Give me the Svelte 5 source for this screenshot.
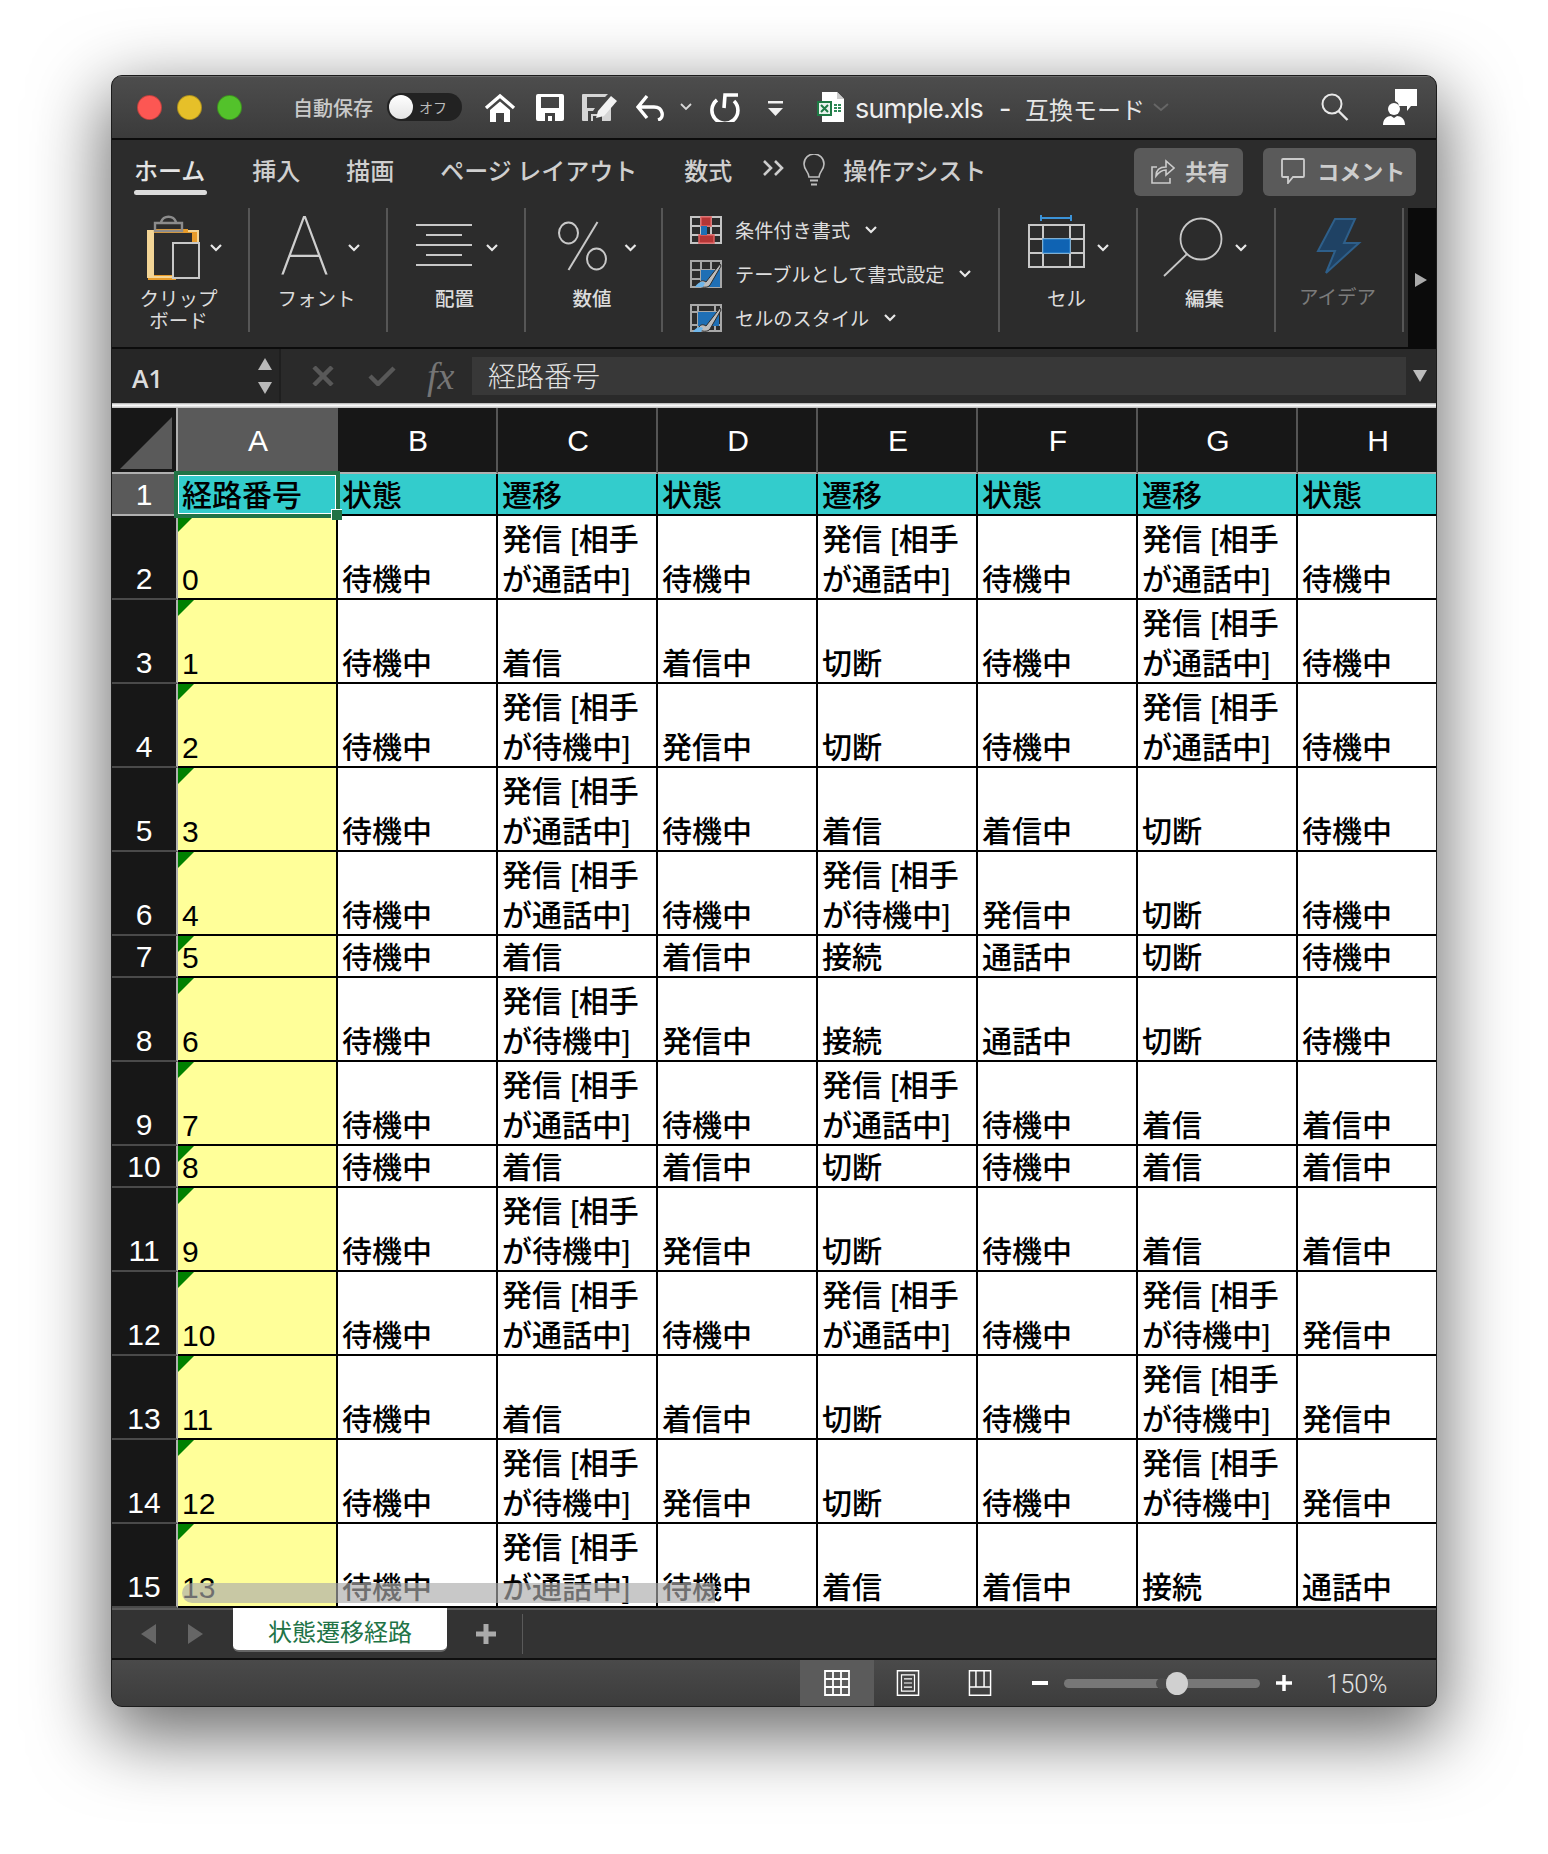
<script>
  const T = '発信 [相手が通話中]';
  const W = '発信 [相手が待機中]';
  const K = '待機中', I = '着信', IC = '着信中', C = '切断', H = '発信中', J = '接続', TK = '通話中';
  const cols = ['A', 'B', 'C', 'D', 'E', 'F', 'G', 'H'];
  const rows = [
    ['0', K, T, K, T, K, T, K],
    ['1', K, I, IC, C, K, T, K],
    ['2', K, W, H, C, K, T, K],
    ['3', K, T, K, I, IC, C, K],
    ['4', K, T, K, W, H, C, K],
    ['5', K, I, IC, J, TK, C, K],
    ['6', K, W, H, J, TK, C, K],
    ['7', K, T, K, T, K, I, IC],
    ['8', K, I, IC, C, K, I, IC],
    ['9', K, W, H, C, K, I, IC],
    ['10', K, T, K, T, K, W, H],
    ['11', K, I, IC, C, K, W, H],
    ['12', K, W, H, C, K, W, H],
    ['13', K, T, K, I, IC, J, TK]
  ].map((cells) => ({ cells, tall: cells.some((c) => c.length > 5) }));
  const head = ['状態', '遷移', '状態', '遷移', '状態', '遷移', '状態'];
  const tabs = ['挿入', '描画', 'ページ レイアウト', '数式'];
</script>

<div class="page">
  <div class="window">
    <header class="titlebar">
      <div class="lights"><i class="red"></i><i class="yellow"></i><i class="green"></i></div>
      <span class="autosave">自動保存</span>
      <div class="toggle"><i></i><span>オフ</span></div>
      <svg class="ic-home" viewBox="0 0 32 29"><path d="M2 15 16 3l14 12" fill="none" stroke="#fff" stroke-width="3.400"/><path d="M6 17 16 8.500 26 17v12h-6v-9h-8v9H6z" fill="#fff"/></svg>
      <svg class="ic-save" viewBox="0 0 28 27"><path fill-rule="evenodd" d="M2 0h24a2 2 0 0 1 2 2v23a2 2 0 0 1-2 2H2a2 2 0 0 1-2-2V2a2 2 0 0 1 2-2zM5 3v11h18V3zM9 19v8h3v-5h4v5h3v-8z" fill="#fff"/></svg>
      <svg class="ic-edit" viewBox="0 0 36 27"><path fill-rule="evenodd" d="M1 0h25l-3 3H5v11h8l-2 3H6v10H1a1 1 0 0 1-1-1V1a1 1 0 0 1 1-1zM9 20v7h2v-5h6v-2zM29 13v13a1 1 0 0 1-1 1H20v-7z" fill="#d5d5d5"/><path d="M14 24l2-7L29 2l6 5-13 15z" fill="#f2f2f2"/></svg>
      <svg class="ic-undo" viewBox="0 0 30 28"><path d="M11 3 2 14l9 11M2 14h16c9 0 11 11 4 13" fill="none" stroke="#fff" stroke-width="3.400"/></svg>
      <svg class="ic-chev" viewBox="0 0 12 8"><path d="M1 1l5 5 5-5" fill="none" stroke="#d8d8d8" stroke-width="1.800"/></svg>
      <svg class="ic-redo" viewBox="0 0 30 30"><path d="M7 8a13 13 0 1 0 17 1" fill="none" stroke="#fff" stroke-width="3.600"/><path d="M14 16l1-13h13" fill="none" stroke="#fff" stroke-width="3.600"/></svg>
      <svg class="ic-cust" viewBox="0 0 15 15"><path d="M0 0h15v2.500H0zM0 7h15l-7.500 8z" fill="#f0f0f0"/></svg>
      <svg class="ic-doc" viewBox="0 0 28 30"><path d="M5 0h15l7 7v23H5z" fill="#fff"/><path d="M20 0l7 7h-7z" fill="#ccc"/><path d="M0 9h15v15H0z" fill="#1f7a45"/><path d="M2 11h11v11H2z" fill="#fff" opacity=".9"/><path d="M4 13l7 7M11 13l-7 7" stroke="#1f7a45" stroke-width="2"/><path d="M17 12h3v2h-3zM21 12h3v2h-3zM17 15h3v2h-3zM21 15h3v2h-3zM17 18h3v2h-3zM21 18h3v2h-3z" fill="#2f8a58"/></svg>
      <span class="docname">sumple.xls</span>
      <span class="dash">-</span>
      <span class="mode">互換モード</span>
      <svg class="ic-modechev" viewBox="0 0 16 9"><path d="M1 1l7 6 7-6" fill="none" stroke="#666" stroke-width="2"/></svg>
      <svg class="ic-search" viewBox="0 0 28 28"><circle cx="11" cy="11" r="9.500" fill="none" stroke="#e8e8e8" stroke-width="2"/><path d="M17.500 18l9 9" stroke="#e8e8e8" stroke-width="2.400"/></svg>
      <svg class="ic-person" viewBox="0 0 34 36"><circle cx="11" cy="20" r="6" fill="#fff"/><path d="M0 36c0-6 4-9 8-9l3 2 3-2c4 0 8 3 8 9z" fill="#fff"/><path d="M12 0h22v17H28l-4 5v-5h-8l-1-3-3-2z" fill="#fff"/></svg>
    </header>

    <section class="ribbon">
      <nav class="tabs">
        <span class="tab home">ホーム</span>
        {#each tabs as t}<span class="tab">{t}</span>{/each}
        <svg class="ic-more" viewBox="0 0 23 18"><path d="M2 2l7 7-7 7M13 2l7 7-7 7" fill="none" stroke="#ccc" stroke-width="2.600"/></svg>
        <svg class="ic-bulb" viewBox="0 0 24 32"><path d="M7 23c0-5-5-7-5-13a10 10 0 0 1 20 0c0 6-5 8-5 13z" fill="none" stroke="#bdbdbd" stroke-width="1.600"/><path d="M8 26.500h8M9 30.500h6" stroke="#bdbdbd" stroke-width="2"/></svg>
        <span class="tab assist">操作アシスト</span>
        <button class="share">
          <svg class="ic-share" viewBox="0 0 24 26"><path d="M6 9H1v16h18v-5" fill="none" stroke="#ccc" stroke-width="1.600"/><path d="M5 18c0-6 4-9 10-9V3l8 7-8 7v-5c-4 0-7 2-10 6z" fill="none" stroke="#ccc" stroke-width="1.600"/></svg>
          <span>共有</span>
        </button>
        <button class="comment">
          <svg class="ic-comment" viewBox="0 0 24 26"><path d="M2 1h20a1 1 0 0 1 1 1v16a1 1 0 0 1-1 1H12l-5 6v-6H2a1 1 0 0 1-1-1V2a1 1 0 0 1 1-1z" fill="none" stroke="#ccc" stroke-width="1.800"/></svg>
          <span>コメント</span>
        </button>
      </nav>

      <div class="groups">
        <div class="group">
          <svg class="g-ic" viewBox="112 208 136 79">
            <path d="M148 231h6v-2h34v2h10v13h-6v-11H154v42h22v5h-28z" fill="#e79b2a"/>
            <path d="M147 230h7v46h22v2h-29zM188 230h11v14h-2v-12h-9z" fill="#f3d596"/>
            <path d="M155 231h27v-8h-27zM161 222a8 8 0 0 1 15 0" fill="none" stroke="#8c8c8c" stroke-width="2.400"/>
            <rect x="173" y="243" width="26" height="35" fill="#2c2c2c" stroke="#c8c8c8" stroke-width="2"/>
            <path class="chev" d="M211 245l5 5 5-5"/>
          </svg>
          <div class="label">クリップ<br />ボード</div>
        </div>
        <div class="group">
          <svg class="g-ic" viewBox="250 208 136 79">
            <text class="glyph" x="280" y="274">A</text>
            <path class="chev" d="M349 245l5 5 5-5"/>
          </svg>
          <div class="label">フォント</div>
        </div>
        <div class="group">
          <svg class="g-ic" viewBox="388 208 136 79">
            <path d="M416 225h56M426 235h36M416 245h56M426 255h36M416 265h56" stroke="#c8c8c8" stroke-width="1.800"/>
            <path class="chev" d="M487 245l5 5 5-5"/>
          </svg>
          <div class="label b">配置</div>
        </div>
        <div class="group">
          <svg class="g-ic" viewBox="526 208 135 79">
            <ellipse cx="568" cy="233" rx="9.500" ry="10.500" fill="none" stroke="#c8c8c8" stroke-width="2"/>
            <ellipse cx="596" cy="259" rx="9.500" ry="10.500" fill="none" stroke="#c8c8c8" stroke-width="2"/>
            <path d="M597 222 568 270" stroke="#c8c8c8" stroke-width="2"/>
            <path class="chev" d="M625 245l5 5 5-5"/>
          </svg>
          <div class="label b">数値</div>
        </div>
        <div class="group styles">
          <div class="style-row">
            <svg class="s-ic" viewBox="0 0 32 28"><path d="M1 1h30v26H1zM1 10h30M1 19h30M11 1v26M21 1v26" fill="none" stroke="#c4c4c4" stroke-width="2"/><path d="M11 1h10v9H11zM9 19h15v8H9z" fill="#b43636" stroke="#e06060" stroke-width="1.500"/><path d="M11 10h6v9h-6z" fill="#1f6fb5"/></svg>
            <span>条件付き書式</span>
            <svg class="s-ch" viewBox="0 0 12 8"><path class="chev" d="M1 1l5 5 5-5"/></svg>
          </div>
          <div class="style-row">
            <svg class="s-ic" viewBox="0 0 32 28"><path d="M1 1h30v26H1zM1 10h30M1 19h30M11 1v26M21 1v26" fill="none" stroke="#a8a8a8" stroke-width="2"/><path d="M11 10h19v17H11z" fill="#1f6fb5"/><path d="M8 25c2-5 5-5 8-3l14-18 1 2-11 19c-2 3-8 3-12 0z" fill="#bcbcbc" stroke="#2c2c2c"/><path d="M5 27c3-5 7-6 10-4l-2 4z" fill="#6fb6ea"/></svg>
            <span>テーブルとして書式設定</span>
            <svg class="s-ch" viewBox="0 0 12 8"><path class="chev" d="M1 1l5 5 5-5"/></svg>
          </div>
          <div class="style-row">
            <svg class="s-ic" viewBox="0 0 32 28"><path d="M1 1h30v26H1zM1 8h30M1 21h30M8 1v26M25 1v26" fill="none" stroke="#a8a8a8" stroke-width="2"/><path d="M8 8h21v14H8z" fill="#1f6fb5"/><path d="M8 25c2-5 5-5 8-3l14-18 1 2-11 19c-2 3-8 3-12 0z" fill="#bcbcbc" stroke="#2c2c2c"/><path d="M3 28c3-5 7-6 10-4l-2 4z" fill="#6fb6ea"/></svg>
            <span>セルのスタイル</span>
            <svg class="s-ch" viewBox="0 0 12 8"><path class="chev" d="M1 1l5 5 5-5"/></svg>
          </div>
        </div>
        <div class="group">
          <svg class="g-ic" viewBox="1000 208 136 79">
            <path d="M1041 215v6M1071 215v6M1041 218h30" stroke="#3b93d8" stroke-width="2"/>
            <path d="M1029 225h55v42h-55zM1029 239h55M1029 253h55M1043 225v42M1070 225v42" fill="none" stroke="#c8c8c8" stroke-width="2"/>
            <rect x="1043" y="239" width="27" height="14" fill="#0f63b3" stroke="#3b93d8"/>
            <path class="chev" d="M1098 245l5 5 5-5"/>
          </svg>
          <div class="label">セル</div>
        </div>
        <div class="group">
          <svg class="g-ic" viewBox="1138 208 136 79">
            <circle cx="1201" cy="239" r="20.500" fill="none" stroke="#c8c8c8" stroke-width="1.800"/>
            <path d="M1187 254 1164 276" stroke="#c8c8c8" stroke-width="1.800"/>
            <path class="chev" d="M1236 245l5 5 5-5"/>
          </svg>
          <div class="label b">編集</div>
        </div>
        <div class="group idea">
          <svg class="g-ic" viewBox="1276 208 126 79">
            <path d="M1335 219h20l-11 24h15l-33 30 9-22h-17z" fill="#1f4264" stroke="#2e5f8a" stroke-width="2"/>
          </svg>
          <div class="label dim">アイデア</div>
        </div>
        <div class="strip"><i></i></div>
      </div>
    </section>

    <div class="formula">
      <div class="namebox">
        <span>A1</span>
        <div class="steppers"><i class="up"></i><i class="down"></i></div>
      </div>
      <svg class="ic-x" viewBox="0 0 22 20"><path d="M2 1l18 18M20 1 2 19" stroke="#585858" stroke-width="4.500"/></svg>
      <svg class="ic-ok" viewBox="0 0 28 20"><path d="M2 10l8 8L26 2" fill="none" stroke="#585858" stroke-width="4.500"/></svg>
      <span class="fx">fx</span>
      <div class="input">経路番号</div>
      <i class="fdrop"></i>
    </div>
    <div class="divider"></div>

    <div class="sheet">
      <div class="row chead">
        <div class="corner"><i></i></div>
        {#each cols as c, i}<div class="ch" class:active={i === 0}>{c}</div>{/each}
      </div>
      <div class="row s">
        <div class="rh active">1</div>
        <div class="cell hd">経路番号</div>
        {#each head as h}<div class="cell hd">{h}</div>{/each}
      </div>
      {#each rows as r, i}
        <div class="row" class:t={r.tall} class:s={!r.tall}>
          <div class="rh">{i + 2}</div>
          {#each r.cells as c, j}
            <div class="cell" class:key={j === 0}><span>{c}</span></div>
          {/each}
        </div>
      {/each}
      <div class="selection"><i></i></div>
      <div class="scroll"></div>
    </div>

    <div class="sheetbar">
      <i class="nav left"></i>
      <i class="nav right"></i>
      <div class="sheet-tab">状態遷移経路</div>
      <svg class="ic-plus" viewBox="0 0 20 20"><path d="M10 0v20M0 10h20" stroke="#aaa" stroke-width="5"/></svg>
      <i class="sb-sep"></i>
    </div>

    <footer class="status">
      <div class="view active">
        <svg class="ic-view" viewBox="0 0 26 26"><path d="M1 1h24v24H1zM1 9h24M1 17h24M9 1v24M17 1v24" fill="none" stroke="#fff" stroke-width="1.800"/></svg>
      </div>
      <div class="view">
        <svg class="ic-view" viewBox="0 0 28 32"><path d="M1 1h26v30H1z" fill="none" stroke="#fff" stroke-width="1.800"/><path d="M6 6h16v20H6z" fill="none" stroke="#fff" stroke-width="1.500"/><path d="M9 11h10M9 16h10M9 21h10" stroke="#fff" stroke-width="1.500"/></svg>
      </div>
      <div class="view">
        <svg class="ic-view" viewBox="0 0 28 32"><path d="M1 1h26v30H1zM1 21h8V1M9 21h10V1M19 21h8" fill="none" stroke="#fff" stroke-width="1.800"/></svg>
      </div>
      <i class="minus"></i>
      <div class="track"><b></b><i></i></div>
      <svg class="ic-zplus" viewBox="0 0 16 16"><path d="M8 0v16M0 8h16" stroke="#fff" stroke-width="3.500"/></svg>
      <span class="zoom">150%</span>
    </footer>
  </div>
</div>

<style>
  :global(body) { margin: 0; background: #fff; }
  * { box-sizing: border-box; }
  i { display: block; }
  .page {
    width: 1548px;
    height: 1854px;
    padding: 75px 0 0 111px;
    overflow: hidden;
    font-family: "Liberation Sans", "Noto Sans CJK JP", sans-serif;
  }
  .window {
    width: 1326px;
    height: 1632px;
    border: 1px solid #1c1c1c;
    border-radius: 11px;
    overflow: hidden;
    background: #2c2c2c;
    box-shadow: 0 24px 72px 6px rgba(0, 0, 0, 0.58);
    display: flex;
    flex-direction: column;
  }
  .titlebar {
    height: 64px;
    flex: none;
    display: flex;
    align-items: center;
    background: linear-gradient(#4d4d4d, #3b3b3b);
    border-bottom: 2px solid #0c0c0c;
    box-shadow: inset 0 1px 0 #6b6b6b;
  }
  .lights { display: flex; gap: 15px; margin-left: 25px; }
  .lights i { width: 25px; height: 25px; border-radius: 50%; border: 1px solid rgba(0, 0, 0, 0.25); }
  .red { background: #fc5753; }
  .yellow { background: #e6c029; }
  .green { background: #53c22b; }
  .autosave {
    margin-left: 51px;
    width: 80px;
    white-space: nowrap;
    font: 500 20px "Noto Sans CJK JP", sans-serif;
    color: #c9c9c9;
  }
  .toggle {
    margin-left: 14px;
    width: 75px;
    height: 28px;
    border-radius: 14px;
    background: #222;
    display: flex;
    align-items: center;
    padding-left: 2px;
    gap: 6px;
    font: 14px "Noto Sans CJK JP", sans-serif;
    color: #bbb;
  }
  .toggle i { width: 24px; height: 24px; border-radius: 50%; background: linear-gradient(#fff, #e4e4e4); }
  .ic-home { width: 32px; height: 29px; margin-left: 22px; }
  .ic-save { width: 28px; height: 27px; margin-left: 20px; }
  .ic-edit { width: 36px; height: 27px; margin-left: 18px; }
  .ic-undo { width: 30px; height: 28px; margin-left: 18px; }
  .ic-chev { width: 12px; height: 8px; margin-left: 14px; }
  .ic-redo { width: 30px; height: 30px; margin-left: 18px; }
  .ic-cust { width: 15px; height: 15px; margin-left: 28px; margin-top: 2px; }
  .ic-doc { width: 28px; height: 30px; margin-left: 34px; }
  .docname { margin: 3px 0 0 10px; font: 27px Inter, Roboto, sans-serif; color: #eee; letter-spacing: -0.8px; width: 128px; white-space: nowrap; }
  .dash { margin: 3px 0 0 16px; width: 26px; font: 27px Inter, sans-serif; color: #eee; }
  .mode { margin-top: 2px; font: 24px "Noto Sans CJK JP", sans-serif; color: #e6e6e6; white-space: nowrap; }
  .ic-modechev { width: 16px; height: 9px; margin-left: 8px; }
  .ic-search { width: 28px; height: 28px; margin-left: 152px; }
  .ic-person { width: 34px; height: 36px; margin-left: 34px; }

  .ribbon {
    height: 209px;
    flex: none;
    background: #2c2c2c;
    border-bottom: 2px solid #0c0c0c;
  }
  .tabs { height: 68px; display: flex; align-items: center; padding: 0 0 8px 22px; }
  .tab {
    margin-right: 46px;
    font: 500 24px "Noto Sans CJK JP", sans-serif;
    color: #cfcfcf;
    white-space: nowrap;
    position: relative;
    line-height: 30px;
  }
  .home { color: #e4e4e4; margin-right: 47px; }
  .tab:nth-child(4) { margin-right: 47px; }
  .home::after {
    content: "";
    position: absolute;
    left: 0;
    right: -2px;
    top: 35px;
    height: 5px;
    border-radius: 3px;
    background: #dcdcdc;
  }
  .ic-more { width: 23px; height: 18px; margin-left: -16px; margin-top: -4px; }
  .ic-bulb { width: 24px; height: 32px; margin-left: 17px; margin-right: 17px; }
  .assist { margin-right: 148px; }
  button {
    border: 0;
    height: 48px;
    border-radius: 6px;
    background: #5a5a5a;
    color: #cdcdcd;
    display: flex;
    align-items: center;
    font: 700 22px "Noto Sans CJK JP", sans-serif;
    padding: 0;
    margin-top: 4px;
  }
  button span { margin-top: -5px; white-space: nowrap; }
  .share { width: 109px; padding-left: 17px; gap: 10px; margin-right: 20px; flex: none; }
  .comment { width: 153px; padding-left: 18px; gap: 12px; flex: none; }
  .ic-share, .ic-comment { width: 24px; height: 26px; flex: none; margin-top: -2px; }

  .groups { display: flex; height: 124px; }
  .group { width: 138px; height: 124px; flex: none; border-right: 2px solid #565656; }
  .group:nth-child(4) { width: 137px; }
  .g-ic { display: block; width: 136px; height: 79px; overflow: visible; }
  .glyph { font: 100 82px Roboto, sans-serif; fill: #cfcfcf; }
  .chev { fill: none; stroke: #e8e8e8; stroke-width: 2.200; }
  .label {
    padding-right: 3px;
    text-align: center;
    font: 400 19.500px/22px "Noto Sans CJK JP", sans-serif;
    color: #dcdcdc;
  }
  .label.b { font-weight: 500; }
  .label.dim { color: #7b7b7b; margin-top: -2px; }
  .styles { width: 337px; }
  .style-row {
    height: 44px;
    display: flex;
    align-items: center;
    padding-left: 27px;
    font: 400 19.200px "Noto Sans CJK JP", sans-serif;
    color: #dedede;
    white-space: nowrap;
  }
  .s-ic { width: 32px; height: 28px; margin-right: 13px; }
  .s-ch { width: 12px; height: 8px; margin-left: 15px; }
  .idea { width: 128px; }
  .idea .g-ic { width: 126px; }
  .strip {
    width: 32px;
    margin-left: 4px;
    height: 141px;
    background: #0b0b0b;
    flex: none;
    padding: 65px 0 0 7px;
  }
  .strip i {
    width: 0;
    height: 0;
    border-left: 12px solid #aaa;
    border-top: 7px solid transparent;
    border-bottom: 7px solid transparent;
  }

  .formula {
    height: 54px;
    flex: none;
    display: flex;
    align-items: center;
    background: #2a2a2a;
    position: relative;
  }
  .namebox {
    width: 169px;
    height: 54px;
    background: #262626;
    border-right: 2px solid #1f1f1f;
    display: flex;
    align-items: center;
    padding-left: 20px;
    font: 600 25px "Open Sans", sans-serif;
    color: #dcdcdc;
  }
  .namebox span { width: 126px; margin-top: 3px; }
  .steppers { display: flex; flex-direction: column; gap: 12px; }
  .up { width: 0; height: 0; border: 7px solid transparent; border-top: 0; border-bottom: 12px solid #b8b8b8; }
  .down { width: 0; height: 0; border: 7px solid transparent; border-bottom: 0; border-top: 12px solid #b8b8b8; }
  .ic-x { width: 22px; height: 20px; margin-left: 31px; }
  .ic-ok { width: 28px; height: 20px; margin-left: 34px; }
  .fx { margin-left: 31px; width: 45px; font: italic 38px "Liberation Serif", serif; color: #757575; }
  .input {
    width: 934px;
    height: 38px;
    background: #383838;
    padding-left: 16px;
    font: 300 28px/36px "Noto Sans CJK JP", sans-serif;
    color: #e2e2e2;
  }
  .fdrop {
    margin-left: 7px;
    width: 0;
    height: 0;
    border: 7px solid transparent;
    border-bottom: 0;
    border-top: 12px solid #bcbcbc;
  }
  .divider { height: 5px; flex: none; background: linear-gradient(#aaa, #fff 45%, #bbb); }

  .sheet {
    position: relative;
    height: 1200px;
    flex: none;
    background: #fff;
    overflow: hidden;
    font-size: 30px;
    font-weight: 500;
  }
  .row { display: flex; }
  .t { height: 84px; }
  .s { height: 42px; }
  .chead { height: 66px; }
  .corner {
    width: 66px;
    flex: none;
    background: #171717;
    border-right: 2px solid #b0b0b0;
    border-bottom: 2px solid #b0b0b0;
    padding: 9px 0 0 8px;
  }
  .corner i {
    width: 52px;
    height: 52px;
    background: #5a5a5a;
    clip-path: polygon(100% 0, 100% 100%, 0 100%);
  }
  .ch {
    width: 160px;
    flex: none;
    background: #171717;
    color: #fff;
    font-size: 30px;
    font-weight: 400;
    display: flex;
    align-items: center;
    justify-content: center;
    padding: 2px 0 0 2px;
    border-right: 2px solid #555;
    border-bottom: 2px solid #b0b0b0;
  }
  .ch.active { background: #5a5a5a; border-right-color: #5a5a5a; }
  .rh {
    width: 66px;
    flex: none;
    background: #171717;
    color: #fff;
    font-size: 30px;
    font-weight: 400;
    line-height: 38px;
    display: flex;
    align-items: flex-end;
    justify-content: center;
    border-right: 2px solid #b0b0b0;
    border-bottom: 2px solid #4a4a4a;
  }
  .rh.active { background: #5a5a5a; border-bottom-color: #b0b0b0; }
  .cell {
    width: 160px;
    flex: none;
    padding-left: 4px;
    color: #000;
    line-height: 40px;
    display: flex;
    align-items: flex-end;
    border-right: 2px solid #000;
    border-bottom: 2px solid #000;
    position: relative;
  }
  .cell:last-child { width: 138px; border-right: 0; }
  .cell span { margin-bottom: -2px; }
  .hd { background: #33cccc; line-height: 37px; }
  .key { background: #ffff99; }
  .key::before {
    content: "";
    position: absolute;
    left: 0;
    top: 0;
    width: 16px;
    height: 16px;
    background: #008000;
    clip-path: polygon(0 0, 100% 0, 0 100%);
  }
  .selection {
    position: absolute;
    left: 62px;
    top: 63px;
    width: 166px;
    height: 47px;
    border: 4px solid #217346;
    outline: 1px solid #fff;
    outline-offset: -5px;
  }
  .selection i {
    position: absolute;
    right: -6px;
    bottom: -6px;
    width: 11px;
    height: 11px;
    background: #217346;
    border: 1px solid #fff;
    border-width: 1px 0 0 1px;
  }
  .scroll {
    position: absolute;
    left: 70px;
    top: 1175px;
    width: 533px;
    height: 20px;
    border-radius: 10px 0 0 10px;
    background: rgba(170, 170, 170, 0.65);
  }

  .sheetbar {
    height: 52px;
    flex: none;
    background: #333;
    border-top: 2px solid #5a5a5a;
    border-bottom: 2px solid #0f0f0f;
    display: flex;
    align-items: center;
  }
  .nav { width: 0; height: 0; border-top: 10px solid transparent; border-bottom: 10px solid transparent; }
  .left { margin-left: 29px; border-right: 15px solid #666; }
  .right { margin-left: 32px; border-left: 15px solid #666; }
  .sheet-tab {
    margin: -2px 0 0 30px;
    align-self: flex-start;
    width: 214px;
    height: 44px;
    background: #fff;
    border-radius: 0 0 6px 6px;
    border-bottom: 2px solid #666;
    text-align: center;
    font: 24px/45px "Noto Sans CJK JP", sans-serif;
    color: #217346;
  }
  .ic-plus { width: 20px; height: 20px; margin-left: 29px; }
  .sb-sep { width: 1px; height: 40px; margin-left: 26px; background: #5a5a5a; }

  .status {
    flex: 1;
    display: flex;
    align-items: center;
    padding-left: 688px;
    background: linear-gradient(#4a4a4a, #3c3c3c);
  }
  .view { width: 72px; height: 100%; display: flex; align-items: center; justify-content: center; }
  .view.active { width: 74px; background: #5b5b5b; margin-right: -2px; }
  .ic-view { height: 26px; width: 28px; }
  .minus { width: 16px; height: 4px; background: #fff; margin-left: 16px; }
  .track { width: 196px; height: 9px; border-radius: 5px; background: #777; margin-left: 16px; position: relative; }
  .track b { position: absolute; left: 92px; top: -1px; width: 12px; height: 11px; border-radius: 50%; background: #4a4a4a; }
  .track i { position: absolute; left: 102px; top: -7px; width: 22px; height: 23px; border-radius: 50%; background: #d0d0d0; }
  .ic-zplus { width: 16px; height: 16px; margin-left: 16px; }
  .zoom { margin: 2px 0 0 34px; font: 300 25.500px Roboto, sans-serif; color: #e2e2e2; }
</style>
